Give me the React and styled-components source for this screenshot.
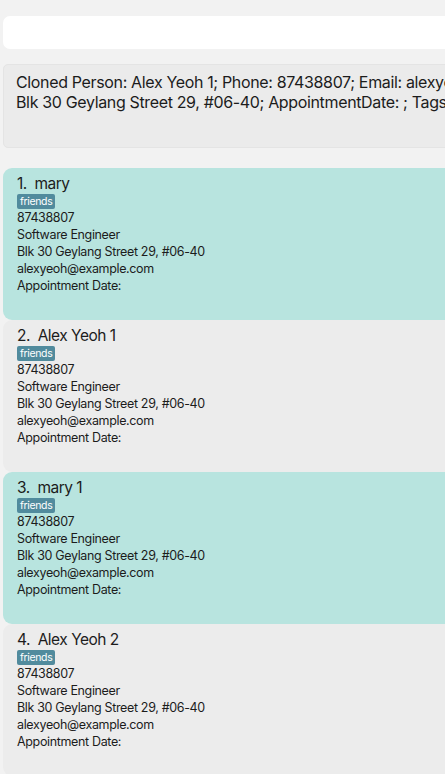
import React from 'react';
import styled, { createGlobalStyle } from 'styled-components';

const GlobalStyle = createGlobalStyle`
  html, body {
    margin: 0;
    padding: 0;
    background: #f2f2f2;
    overflow: hidden;
  }
  body {
    font-family: Inter, "Noto Sans", "Liberation Sans", sans-serif;
    color: #1c1c1c;
  }
`;

const persons = [
  { name: 'mary', highlight: true },
  { name: 'Alex Yeoh 1', highlight: false },
  { name: 'mary 1', highlight: true },
  { name: 'Alex Yeoh 2', highlight: false },
];

const Page = styled.div`
  width: 640px;
  padding: 16px 0 0 3px;
  display: flex;
  flex-direction: column;
`;

const CommandBox = styled.div`
  height: 33px;
  background: #ffffff;
  border-radius: 7px;
`;

const ResultBox = styled.div`
  margin-top: 15px;
  height: 84px;
  box-sizing: border-box;
  padding: 7px 12px 0 12px;
  background: #ebebeb;
  border: 1px solid #e4e4e4;
  border-radius: 5px;
  font-size: 16px;
  line-height: 20px;
  letter-spacing: -0.35px;
  color: #1c1c1c;
  white-space: nowrap;
`;

const List = styled.div`
  margin-top: 20px;
  display: flex;
  flex-direction: column;
`;

const Card = styled.div`
  min-height: 152px;
  box-sizing: border-box;
  padding: 6px 14px 0 14px;
  background: ${p => (p.$highlight ? '#b8e4df' : '#ececec')};
  border-radius: 9px 0 0 9px;
  display: flex;
  flex-direction: column;
  align-items: flex-start;
`;

const Title = styled.div`
  font-size: 15.5px;
  line-height: 20px;
  letter-spacing: -0.5px;
  white-space: pre;
`;

const Tag = styled.span`
  height: 15px;
  line-height: 15px;
  padding: 0 3px;
  background: #518b9d;
  color: #ffffff;
  font-size: 10.5px;
  letter-spacing: -0.35px;
  border-radius: 2px;
`;

const Detail = styled.div`
  font-size: 12.5px;
  line-height: 17px;
  letter-spacing: -0.35px;
  color: #1c1c1c;
`;

function PersonCard({ index, person }) {
  return (
    <Card $highlight={person.highlight}>
      <Title>{`${index}.  ${person.name}`}</Title>
      <Tag>friends</Tag>
      <Detail>87438807</Detail>
      <Detail>Software Engineer</Detail>
      <Detail>Blk 30 Geylang Street 29, #06-40</Detail>
      <Detail>alexyeoh@example.com</Detail>
      <Detail>Appointment Date:</Detail>
    </Card>
  );
}

export default function App() {
  return (
    <>
      <GlobalStyle />
      <Page>
        <CommandBox />
        <ResultBox>
          <div>Cloned Person: Alex Yeoh 1; Phone: 87438807; Email: alexyeoh@example.com;</div>
          <div>Blk 30 Geylang Street 29, #06-40; AppointmentDate: ; Tags: [friends]</div>
        </ResultBox>
        <List>
          {persons.map((p, i) => (
            <PersonCard key={i} index={i + 1} person={p} />
          ))}
        </List>
      </Page>
    </>
  );
}
